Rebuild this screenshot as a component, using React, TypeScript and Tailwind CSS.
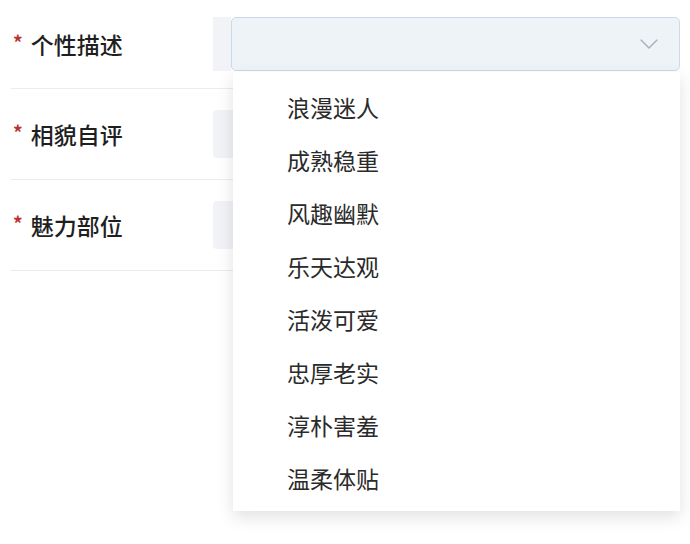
import { ChevronDown } from "lucide-react";

const OPTIONS = [
  "浪漫迷人",
  "成熟稳重",
  "风趣幽默",
  "乐天达观",
  "活泼可爱",
  "忠厚老实",
  "淳朴害羞",
  "温柔体贴",
];

const FONT = { fontFamily: '"Noto Sans CJK SC", "Noto Sans", sans-serif' };

function Label({ text }: { text: string }) {
  return (
    <div className="flex w-[202px] shrink-0 items-center pl-[2px]">
      <span className="mr-[8px] -translate-y-[3px] text-[19px] font-bold leading-none text-[#bb332e]">*</span>
      <span className="text-[23px] font-medium leading-none text-[#1f1f1f]">{text}</span>
    </div>
  );
}

export default function App() {
  return (
    <div className="relative h-[544px] w-[690px] overflow-hidden bg-white" style={FONT}>
      <div className="pl-[11px] pr-[10px]">
        <div className="flex h-[89px] items-center border-b border-[#ececec]">
          <Label text="个性描述" />
          <div className="flex h-[54px] flex-1 items-center">
            <div className="h-[54px] w-[18px] bg-[#f1f3f6]" />
            <div className="flex h-[54px] flex-1 items-center justify-end rounded-[5px] border border-[#c9dbeb] bg-[#eef3f8] pr-[14px]">
              <ChevronDown className="h-[32px] w-[32px] text-[#a7aeb5]" strokeWidth={1} />
            </div>
          </div>
        </div>
        <div className="flex h-[91px] items-center border-b border-[#ececec]">
          <Label text="相貌自评" />
          <div className="h-[48px] flex-1 rounded-[4px] bg-[#f1f3f6]" />
        </div>
        <div className="flex h-[91px] items-center border-b border-[#ececec]">
          <Label text="魅力部位" />
          <div className="h-[48px] flex-1 rounded-[4px] bg-[#f1f3f6]" />
        </div>
      </div>

      <div className="absolute left-[233px] top-[72px] h-[439px] w-[447px] bg-white pt-[9px] shadow-[0_6px_16px_rgba(0,0,0,0.12)]">
        {OPTIONS.map((o) => (
          <div key={o} className="flex h-[53px] items-center pl-[54px] text-[23px] leading-none text-[#2a2a2a]">
            {o}
          </div>
        ))}
      </div>
    </div>
  );
}
